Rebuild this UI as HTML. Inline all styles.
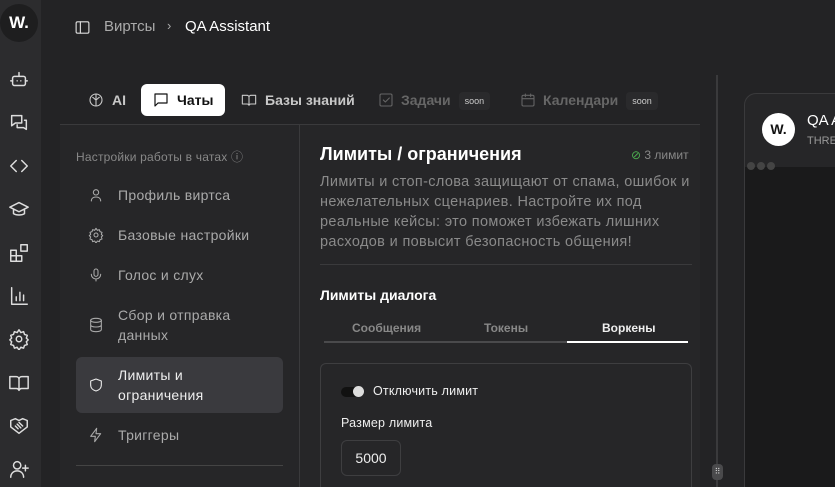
<!DOCTYPE html>
<html><head><meta charset="utf-8"><style>
*{margin:0;padding:0;box-sizing:border-box}
html,body{width:835px;height:487px;overflow:hidden}
body{background:#232325;font-family:"Liberation Sans",sans-serif;color:#e8e8e8;position:relative}
.abs{position:absolute;white-space:nowrap}
.rail{left:0;top:0;width:41px;height:487px;background:#2c2c2e}
.logo{left:0;top:4px;width:38px;height:38px;border-radius:50%;background:#1e1e1f;color:#fff;font-weight:bold;font-size:17px;text-align:center;line-height:38px}
.ri{left:8px;width:22px;height:22px}
svg{fill:none;stroke:currentColor;stroke-width:1.6;stroke-linecap:round;stroke-linejoin:round}
.crumb{top:18px;font-size:15px}
.tab{top:84px;height:32px;line-height:32px;font-size:14px;font-weight:bold;color:#c8c8c8}
.soon{display:inline-block;font-size:9px;background:#2a2a2c;color:#ccc;padding:0 6px;line-height:18px;border-radius:4px;margin-left:8px;vertical-align:middle;font-weight:normal}
.nav{left:88px;font-size:14px;color:#aaa;line-height:20px;letter-spacing:.3px}
.ni{left:88px;width:16px;height:16px;color:#aaa}
</style></head><body>
<div class="abs rail"></div>
<div class="abs logo">W.</div>
<svg class="abs ri" style="top:69px;color:#ddd" viewBox="0 0 24 24"><rect x="5" y="8" width="14" height="10" rx="2"/><path d="M12 8V4M3 13h2M19 13h2M10 13h0M14 13h0"/></svg>
<svg class="abs ri" style="top:112px;color:#ddd" viewBox="0 0 24 24"><path d="M4 4h11v8H8l-4 3zM18 9h2v10l-3-2h-7v-3"/></svg>
<svg class="abs ri" style="top:155px;color:#ddd" viewBox="0 0 24 24"><path d="M9 6l-6 6 6 6M15 6l6 6-6 6"/></svg>
<svg class="abs ri" style="top:198px;color:#ddd" viewBox="0 0 24 24"><path d="M2 10l10-5 10 5-10 5zM6 12v5c3 2 9 2 12 0v-5"/></svg>
<svg class="abs ri" style="top:242px;color:#ddd" viewBox="0 0 24 24"><rect x="3" y="9" width="6" height="6"/><rect x="3" y="15" width="6" height="6"/><rect x="9" y="15" width="6" height="6"/><rect x="14" y="3" width="7" height="7"/></svg>
<svg class="abs ri" style="top:285px;color:#ddd" viewBox="0 0 24 24"><path d="M4 3v18h17M9 17v-4M13 17V8M17 17v-6"/></svg>
<svg class="abs ri" style="top:328px;color:#ddd" viewBox="0 0 24 24"><circle cx="12" cy="12" r="3"/><path d="M12 2l2 3 3-1 1 3 3 1-1 3 2 2-2 2 1 3-3 1-1 3-3-1-2 3-2-3-3 1-1-3-3-1 1-3-2-2 2-2-1-3 3-1 1-3 3 1z"/></svg>
<svg class="abs ri" style="top:372px;color:#ddd" viewBox="0 0 24 24"><path d="M2 5h7a3 3 0 013 3v12a3 3 0 00-3-2H2zM22 5h-7a3 3 0 00-3 3v12a3 3 0 013-2h7z"/></svg>
<svg class="abs ri" style="top:415px;color:#ddd" viewBox="0 0 24 24"><path d="M3 6l5-2 4 2 4-2 5 2v7l-9 7-9-7zM8 12l3 3M10 10l4 4M12 8l4 4"/></svg>
<svg class="abs ri" style="top:458px;color:#ddd" viewBox="0 0 24 24"><circle cx="10" cy="8" r="4"/><path d="M3 21c0-4 3-7 7-7s7 3 7 7M19 8v6M16 11h6"/></svg>

<svg class="abs" style="left:74px;top:19px;width:17px;height:17px;color:#ddd" viewBox="0 0 24 24"><rect x="3" y="4" width="18" height="16" rx="2"/><path d="M9 4v16"/></svg>
<div class="abs crumb" style="left:104px;color:#aaa">Виртсы</div>
<div class="abs crumb" style="left:167px;color:#aaa;font-size:13px">›</div>
<div class="abs crumb" style="left:185px;color:#fff">QA Assistant</div>

<div class="abs tab" style="left:88px"><span style="margin-left:24px">AI</span></div>
<svg class="abs" style="left:88px;top:92px;width:16px;height:16px;color:#ccc" viewBox="0 0 24 24"><circle cx="12" cy="12" r="9"/><path d="M12 3v18M7 8c2 1 3 3 5 4M17 8c-2 1-3 3-5 4"/></svg>
<div class="abs tab" style="left:141px;width:84px;background:#fff;color:#111;border-radius:6px"><span style="margin-left:36px">Чаты</span></div>
<svg class="abs" style="left:152px;top:91px;width:18px;height:18px;color:#111" viewBox="0 0 24 24"><path d="M4 4h16v12H8l-4 4z"/></svg>
<div class="abs tab" style="left:241px"><span style="margin-left:24px">Базы знаний</span></div>
<svg class="abs" style="left:241px;top:92px;width:16px;height:16px;color:#ccc" viewBox="0 0 24 24"><path d="M2 5h7a3 3 0 013 3v12a3 3 0 00-3-2H2zM22 5h-7a3 3 0 00-3 3v12a3 3 0 013-2h7z"/></svg>
<div class="abs tab" style="left:378px;color:#666"><span style="margin-left:23px">Задачи</span><span class="soon">soon</span></div>
<svg class="abs" style="left:378px;top:92px;width:16px;height:16px;color:#666" viewBox="0 0 24 24"><rect x="3" y="3" width="18" height="18" rx="2"/><path d="M8 12l3 3 6-6"/></svg>
<div class="abs tab" style="left:520px;color:#666"><span style="margin-left:23px">Календари</span><span class="soon">soon</span></div>
<svg class="abs" style="left:520px;top:92px;width:16px;height:16px;color:#666" viewBox="0 0 24 24"><rect x="3" y="5" width="18" height="16" rx="2"/><path d="M3 10h18M8 3v4M16 3v4"/></svg>

<div class="abs" style="left:60px;top:124px;width:640px;height:363px;background:#262628;border-top:1px solid #3a3a3c"></div>
<div class="abs" style="left:299px;top:125px;width:1px;height:362px;background:#3a3a3c"></div>

<div class="abs" style="left:76px;top:148px;font-size:12px;color:#888;letter-spacing:.2px">Настройки работы в чатах ⓘ</div>
<svg class="abs ni" style="top:187px" viewBox="0 0 24 24"><circle cx="12" cy="8" r="4"/><path d="M5 21c0-4 3-6 7-6s7 2 7 6"/></svg>
<div class="abs nav" style="left:118px;top:185px">Профиль виртса</div>
<svg class="abs ni" style="top:227px" viewBox="0 0 24 24"><circle cx="12" cy="12" r="3"/><path d="M12 2l2 3 3-1 1 3 3 1-1 3 2 2-2 2 1 3-3 1-1 3-3-1-2 3-2-3-3 1-1-3-3-1 1-3-2-2 2-2-1-3 3-1 1-3 3 1z"/></svg>
<div class="abs nav" style="left:118px;top:225px">Базовые настройки</div>
<svg class="abs ni" style="top:267px" viewBox="0 0 24 24"><rect x="9" y="3" width="6" height="11" rx="3"/><path d="M5 11a7 7 0 0014 0M12 18v3"/></svg>
<div class="abs nav" style="left:118px;top:265px">Голос и слух</div>
<svg class="abs ni" style="top:317px" viewBox="0 0 24 24"><ellipse cx="12" cy="5" rx="8" ry="3"/><path d="M4 5v14c0 2 4 3 8 3s8-1 8-3V5M4 12c0 2 4 3 8 3s8-1 8-3"/></svg>
<div class="abs nav" style="left:118px;top:305px">Сбор и отправка<br>данных</div>
<div class="abs" style="left:76px;top:357px;width:207px;height:56px;background:#3a3a3e;border-radius:6px"></div>
<svg class="abs ni" style="top:377px;color:#eee" viewBox="0 0 24 24"><path d="M12 3l8 3v6c0 5-4 8-8 9-4-1-8-4-8-9V6z"/></svg>
<div class="abs nav" style="left:118px;top:365px;color:#eee">Лимиты и<br>ограничения</div>
<svg class="abs ni" style="top:427px" viewBox="0 0 24 24"><path d="M13 2L4 14h7l-1 8 9-12h-7z"/></svg>
<div class="abs nav" style="left:118px;top:425px">Триггеры</div>
<div class="abs" style="left:76px;top:465px;width:207px;height:1px;background:#444"></div>

<div class="abs" style="left:320px;top:144px;font-size:18px;font-weight:bold;color:#fff">Лимиты / ограничения</div>
<div class="abs" style="left:631px;top:148px;font-size:12px;color:#888"><span style="color:#4caf50">⊘</span> 3 лимит</div>
<div class="abs" style="left:320px;top:172px;font-size:14.5px;line-height:20px;color:#8a8a8a;letter-spacing:.35px">Лимиты и стоп-слова защищают от спама, ошибок и<br>нежелательных сценариев. Настройте их под<br>реальные кейсы: это поможет избежать лишних<br>расходов и повысит безопасность общения!</div>
<div class="abs" style="left:320px;top:264px;width:372px;height:1px;background:#3a3a3c"></div>
<div class="abs" style="left:320px;top:287px;font-size:14px;font-weight:bold;color:#fff">Лимиты диалога</div>
<div class="abs" style="left:352px;top:321px;font-size:12px;font-weight:bold;color:#888">Сообщения</div>
<div class="abs" style="left:484px;top:321px;font-size:12px;font-weight:bold;color:#888">Токены</div>
<div class="abs" style="left:602px;top:321px;font-size:12px;font-weight:bold;color:#eee">Воркены</div>
<div class="abs" style="left:324px;top:341px;width:243px;height:2px;background:#4a4a4c"></div>
<div class="abs" style="left:567px;top:341px;width:121px;height:2px;background:#fff"></div>
<div class="abs" style="left:320px;top:363px;width:372px;height:124px;border:1px solid #3e3e40;border-bottom:none;border-radius:6px 6px 0 0"></div>
<div class="abs" style="left:341px;top:387px;width:22px;height:10px;border-radius:5px;background:#111"></div>
<div class="abs" style="left:353px;top:386px;width:11px;height:11px;border-radius:50%;background:#ddd"></div>
<div class="abs" style="left:373px;top:384px;font-size:12.5px;color:#eee;letter-spacing:.2px">Отключить лимит</div>
<div class="abs" style="left:341px;top:416px;font-size:12.5px;color:#eee;letter-spacing:.2px">Размер лимита</div>
<div class="abs" style="left:341px;top:440px;width:60px;height:36px;border:1px solid #3e3e40;border-radius:6px;font-size:14px;line-height:34px;text-align:center;color:#eee">5000</div>

<div class="abs" style="left:716px;top:75px;width:2px;height:412px;background:#3a3a3c"></div>
<div class="abs" style="left:712px;top:464px;width:11px;height:16px;background:#4a4a4c;border-radius:4px;font-size:8px;color:#ccc;text-align:center;line-height:16px">⠿</div>
<div class="abs" style="left:744px;top:93px;width:120px;height:394px;background:#262628;border:1px solid #3a3a3c;border-bottom:none;border-radius:12px 12px 0 0;overflow:hidden">
<div class="abs" style="left:0;top:73px;width:120px;height:330px;background:#1a1a1b"></div>
<div class="abs" style="left:17px;top:19px;width:33px;height:33px;border-radius:50%;background:#fff;color:#111;font-weight:bold;font-size:14px;text-align:center;line-height:33px">W.</div>
<div class="abs" style="left:62px;top:18px;font-size:15px;color:#fff">QA Assistant</div>
<div class="abs" style="left:62px;top:41px;font-size:11px;color:#999">THREE</div>
<div class="abs" style="left:2px;top:68px;width:8px;height:8px;border-radius:50%;background:#444"></div>
<div class="abs" style="left:12px;top:68px;width:8px;height:8px;border-radius:50%;background:#444"></div>
<div class="abs" style="left:22px;top:68px;width:8px;height:8px;border-radius:50%;background:#444"></div>
</div>
</body></html>
